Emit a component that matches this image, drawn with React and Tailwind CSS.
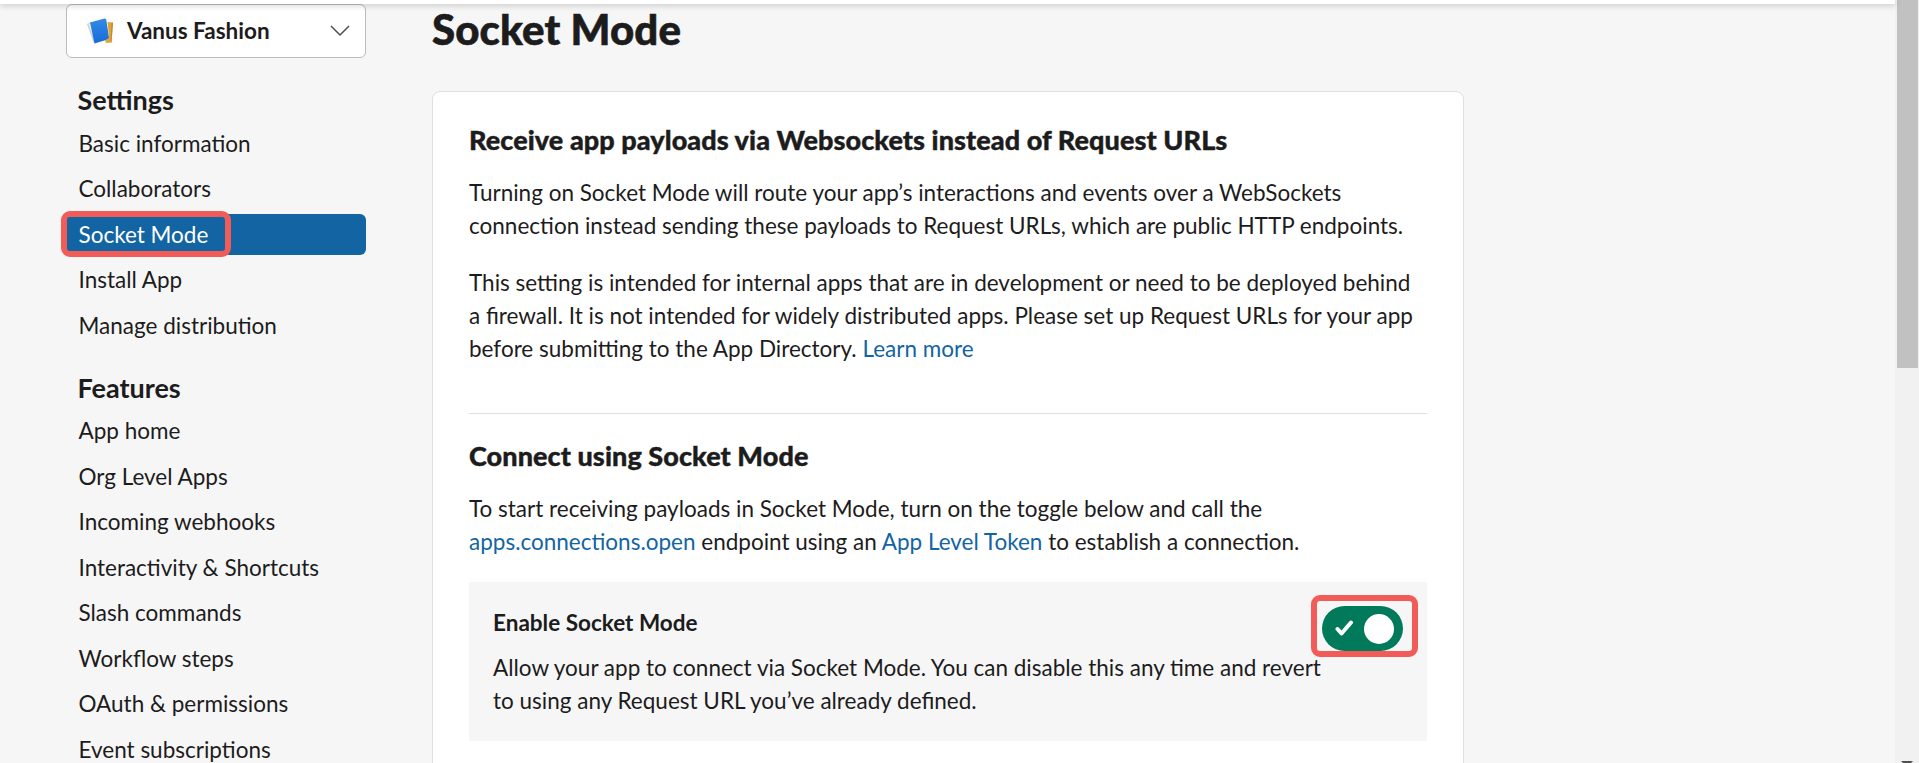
import React from 'react';

const sections = [
  {
    title: 'Settings',
    items: ['Basic information', 'Collaborators', 'Socket Mode', 'Install App', 'Manage distribution'],
  },
  {
    title: 'Features',
    items: [
      'App home',
      'Org Level Apps',
      'Incoming webhooks',
      'Interactivity & Shortcuts',
      'Slash commands',
      'Workflow steps',
      'OAuth & permissions',
      'Event subscriptions',
    ],
  },
];

function AppIcon() {
  return (
    <svg width="30" height="30" viewBox="0 0 30 30" className="shrink-0">
      <defs>
        <linearGradient id="book" x1="0" y1="0" x2="0" y2="1">
          <stop offset="0" stopColor="#338be6" />
          <stop offset="1" stopColor="#176bd8" />
        </linearGradient>
      </defs>
      <rect width="30" height="30" rx="5" fill="#fdfdfd" />
      <path d="M2 8 L6 6 L11 27 L8.500 26.500 Z" fill="#cbd0d5" />
      <path d="M3.500 8 L5.500 7 L10.500 27 Z" fill="#f4f4f4" />
      <path d="M5 6.500 L19.500 2.500 Q21 2.300 21.300 4 L24 21.500 Q24 23 22.500 23.500 L9.500 27.500 Z" fill="url(#book)" />
      <path d="M22.500 6 L28 6.500 L26.500 26.500 L21 27 L20 24.500 L24 22 Z" fill="#e2a43b" />
      <path d="M26.500 7 L28 6.500 L26.500 26.500 L25.500 26 Z" fill="#c58a2f" />
    </svg>
  );
}

function AppPicker() {
  return (
    <button className="flex h-[54px] w-[300px] shrink-0 items-center rounded-md border border-[#bbb] bg-white pl-[18px] pr-[15px]">
      <AppIcon />
      <span className="ml-[12px] grow pb-px text-left text-[22.5px] leading-[33px] font-bold">Vanus Fashion</span>
      <svg width="20" height="12" viewBox="0 0 20 12" fill="none" stroke="#4d4d4d" strokeWidth="1.500">
        <path d="M1 1 L10 10 L19 1" />
      </svg>
    </button>
  );
}

function NavItem({ label }) {
  if (label === 'Socket Mode') {
    return (
      <li className="relative flex h-[41px] items-center rounded-md bg-[#1264a3] pl-[12.500px] text-white">
        <span>{label}</span>
        <span className="absolute -top-[3px] -left-[5px] h-[46px] w-[170px] rounded-[9px] border-6 border-[#f25c58]" />
      </li>
    );
  }
  return <li className="flex h-[41px] items-center pl-[12.500px]">{label}</li>;
}

function Sidebar() {
  return (
    <aside className="flex w-[300px] shrink-0 flex-col">
      <AppPicker />
      {sections.map((section) => (
        <nav key={section.title} className="mt-[24px]">
          <h3 className="pl-[11.500px] text-[27px] leading-[36px] font-bold">{section.title}</h3>
          <ul className="mt-[4.500px] flex flex-col gap-[4.500px]">
            {section.items.map((item) => (
              <NavItem key={item} label={item} />
            ))}
          </ul>
        </nav>
      ))}
    </aside>
  );
}

function Toggle() {
  return (
    <div className="absolute top-[13px] right-[9px] flex h-[62px] w-[107px] rounded-[9px] border-6 border-[#f25c58] pt-[5px] pl-[5px]">
      <div className="flex h-[45px] w-[81px] items-center rounded-full bg-[#007a5a] pr-[9px] pl-[13px]">
        <svg width="19" height="17" viewBox="0 0 19 17" fill="none" stroke="#fff" strokeWidth="4" strokeLinecap="round" strokeLinejoin="round">
          <path d="M2.500 9 L6.500 13.500 L16 2.500" />
        </svg>
        <div className="ml-auto size-[30px] rounded-full bg-white" />
      </div>
    </div>
  );
}

function Link({ children }) {
  return <a className="text-[#1264a3]">{children}</a>;
}

function Heading({ className, children }) {
  return (
    <h2 className={`text-[27px] leading-[36px] font-black tracking-[0.08px] [-webkit-text-stroke:0.4px_#1d1c1d] ${className}`}>
      {children}
    </h2>
  );
}

export default function App() {
  return (
    <div className="flex h-[763px] w-[1919px] overflow-hidden bg-[#f6f6f6] font-['Lato',sans-serif] text-[22.5px] leading-[33px] whitespace-nowrap text-[#1d1c1d]">
      <div className="flex w-[1895px] shrink-0 flex-col">
        <header className="z-10 h-[4px] w-full shrink-0 bg-white shadow-[0_1px_6px_rgba(0,0,0,0.25)]" />
        <div className="flex pl-[66px]">
          <Sidebar />
          <main className="ml-[66px] w-[1032px]">
            <h1 className="text-[42px] leading-[50px] font-black tracking-[0.12px] [-webkit-text-stroke:0.6px_#1d1c1d]">
              Socket Mode
            </h1>
            <section className="mt-[37px] h-[740px] rounded-lg border border-[#dfdfdf] bg-white pt-[30px] pr-[36px] pl-[36px]">
              <Heading>Receive app payloads via Websockets instead of Request URLs</Heading>
              <p className="mt-[18px]">
                Turning on Socket Mode will route your app’s interactions and events over a WebSockets
                <br />
                connection instead sending these payloads to Request URLs, which are public HTTP endpoints.
              </p>
              <p className="mt-[24px]">
                This setting is intended for internal apps that are in development or need to be deployed behind
                <br />
                a firewall. It is not intended for widely distributed apps. Please set up Request URLs for your app
                <br />
                before submitting to the App Directory. <Link>Learn more</Link>
              </p>
              <hr className="mt-[48px] border-[#dfdfdf]" />
              <Heading className="mt-[24px]">Connect using Socket Mode</Heading>
              <p className="mt-[18px]">
                To start receiving payloads in Socket Mode, turn on the toggle below and call the
                <br />
                <Link>apps.connections.open</Link> endpoint using an <Link>App Level Token</Link> to establish a
                connection.
              </p>
              <div className="relative mt-[24px] h-[159px] bg-[#f6f6f6] px-[24px] pt-[24px]">
                <h4 className="font-bold">Enable Socket Mode</h4>
                <p className="mt-[12px]">
                  Allow your app to connect via Socket Mode. You can disable this any time and revert
                  <br />
                  to using any Request URL you’ve already defined.
                </p>
                <Toggle />
              </div>
            </section>
          </main>
        </div>
      </div>
      <div className="flex w-[24px] shrink-0 flex-col items-center justify-between bg-[#f1f1f1]">
        <div className="h-[368px] w-[21px] bg-[#c1c1c1]" />
        <svg width="12" height="2" viewBox="0 0 12 2">
          <path d="M0 0 H12 L10 2 H2 Z" fill="#505050" />
        </svg>
      </div>
    </div>
  );
}
